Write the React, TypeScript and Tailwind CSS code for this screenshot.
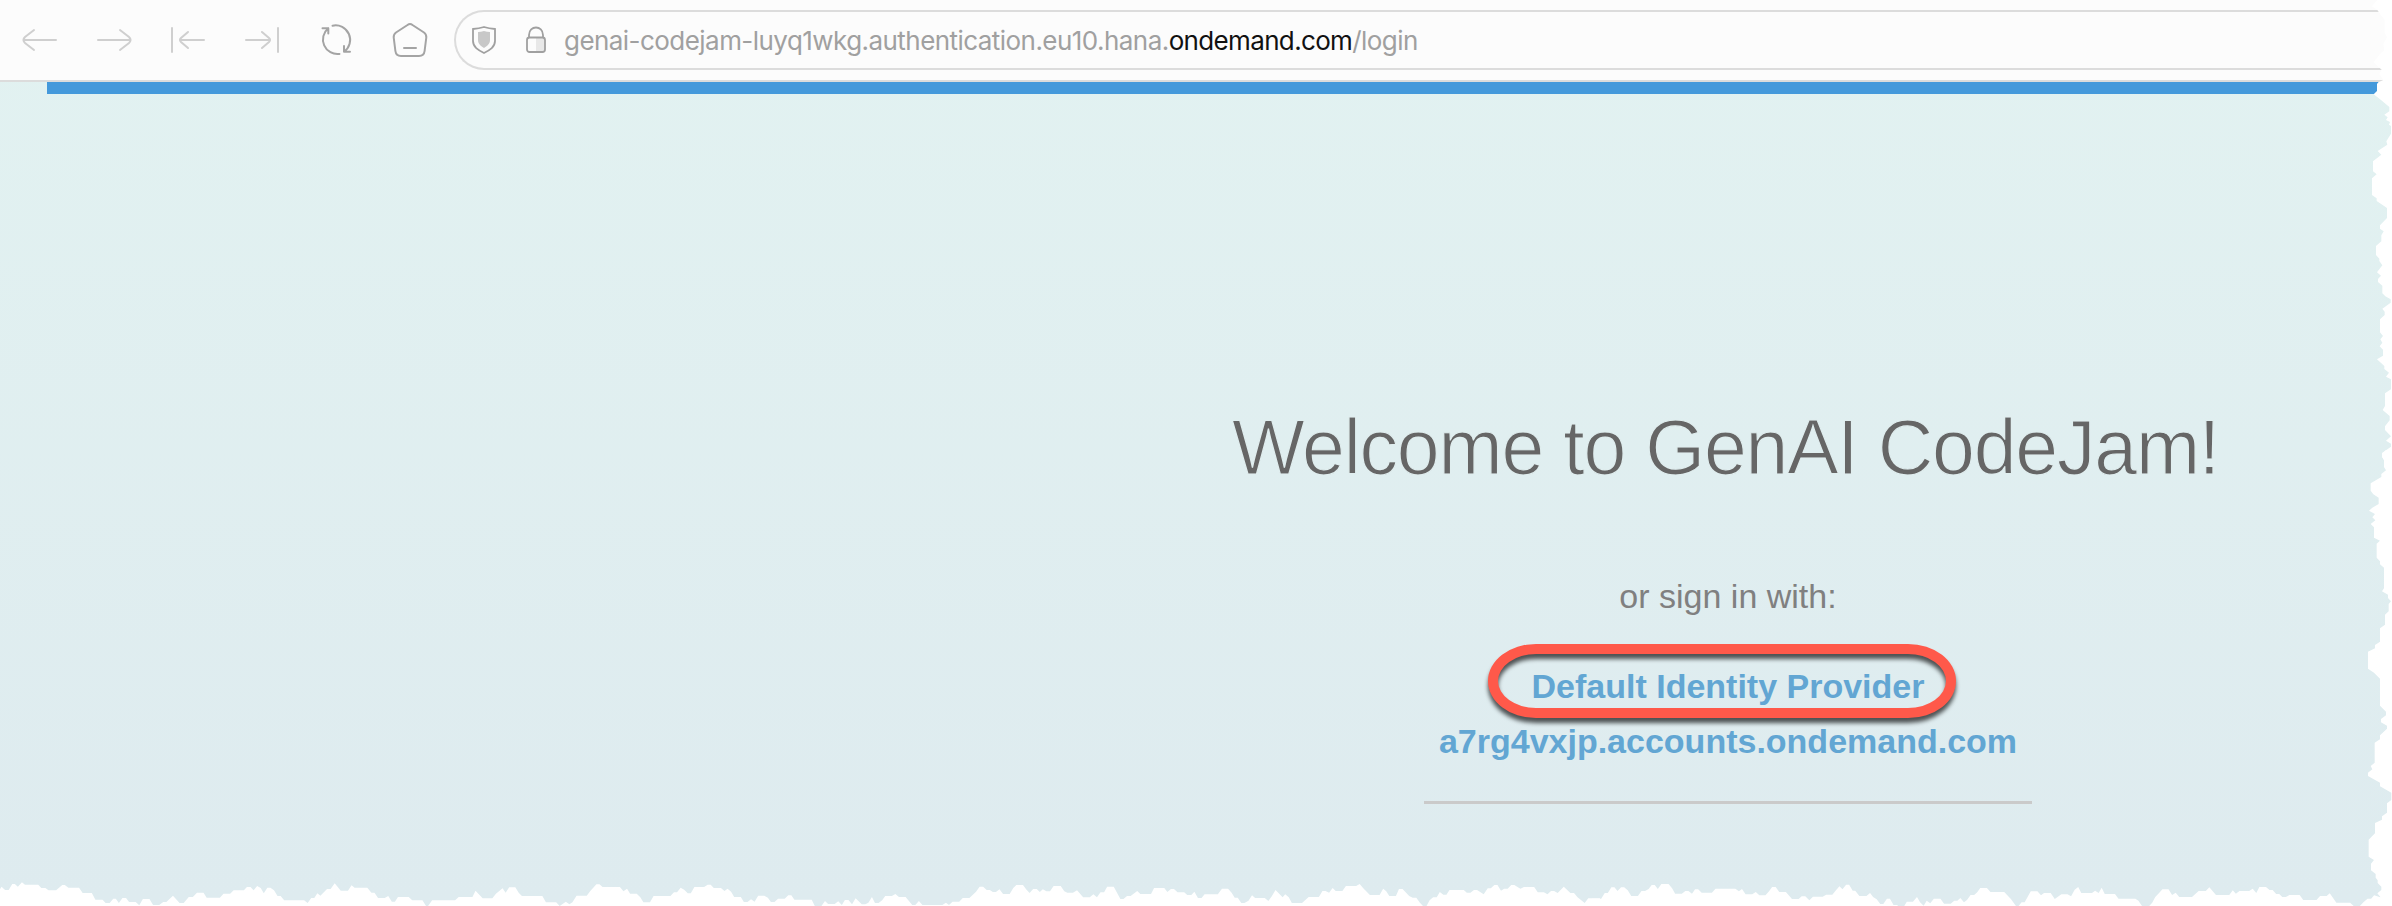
import type { ReactNode } from "react";

const RIGHT_TOP =
  "136,0 120,19 136,30 146,44 158,60 158,98 165,112 154,132 157,150 141,166 125,187 141,202 149,209 142,222 154,240 139,247 135,252 135,273 125,283 147,300 172,321 172,334 157,344 167,352 162,360 174,366 171,374 177,378 177,401 163,424 166,434 137,453 148,464 123,484 123,514 134,523 120,535 120,585 134,595 134,603 165,624 165,654 144,676 144,686 155,694 148,706 148,724 132,738 132,765 142,776 142,783 151,796 135,817 147,827 138,837 138,846 151,857 151,880 160,889 176,898 176,908 151,926 158,935 158,945 144,958 144,997 153,1008 145,1018 151,1028 143,1039 153,1049 153,1067 135,1078 157,1098 157,1107 171,1118 162,1130 177,1138 177,1168 159,1180 159,1218 152,1230 173,1248 173,1261 159,1279 159,1290 177,1309 162,1322 177,1331 177,1340 150,1359 150,1370 156,1380";

const RIGHT_BOTTOM =
  "162,0 150,12 150,20 156,30 156,51 162,61 148,72 148,81 116,100 116,122 124,133 140,143 140,162 121,173 111,182 129,192 121,202 130,211 116,222 126,232 126,263 144,272 134,281 134,323 144,334 144,343 156,353 156,415 150,424 168,434 168,444 177,454 170,462 170,484 159,494 159,524 144,535 144,575 129,585 129,595 108,605 108,656 126,668 144,686 144,767 162,785 162,796 147,807 147,817 165,827 165,836 144,856 144,868 128,878 128,938 116,948 121,958 108,968 108,978 144,998 144,1009 178,1028 178,1050 165,1060 165,1088 150,1099 150,1109 129,1119 129,1150 110,1169 110,1220 126,1230 117,1241 117,1261 131,1272 131,1283 137,1291 137,1299 148,1310 148,1320 136,1330 145,1341";

const BOTTOM_LEFT =
  "0,70 3,62 10,72 17,72 24,54 29,54 35,62 43,49 49,56 75,56 81,66 89,66 95,73 110,73 122,57 127,57 134,65 155,65 162,81 180,81 187,101 201,101 207,111 215,111 222,98 227,98 233,111 240,96 247,96 253,108 266,108 273,118 280,99 293,99 300,117 312,117 320,108 326,108 339,89 352,111 360,111 370,93 378,93 386,80 399,80 405,95 431,95 438,83 451,83 458,73 478,73 484,63 491,63 497,73 504,60 511,66 517,82 524,65 530,65 537,73 544,90 550,90 557,103 596,103 603,111 610,96 616,96 622,82 628,89 641,69 648,69 656,52 668,74 682,74 689,58 695,65 720,65 728,80 734,80 741,96 754,96 761,90 768,107 774,107 780,93 801,93 808,103 828,103 835,120 839,120 847,103 892,103 899,93 926,93 932,74 946,97 965,97 972,83 985,67 991,80 998,64 1010,64 1017,81 1023,90 1063,90 1070,109 1090,109 1097,120 1109,107 1116,115 1122,109 1130,89 1150,89 1157,75 1169,55 1175,55 1181,63 1215,63 1222,76 1229,68 1235,83 1248,83 1255,94 1261,109 1274,109 1281,90 1314,90 1321,79 1327,79 1334,65 1341,71 1348,82 1354,82 1361,63 1380,63 1387,56 1393,56 1399,66 1413,66 1420,75 1426,68 1433,77 1439,93 1452,93 1458,108 1465,108 1472,100 1479,107 1486,89 1498,89 1505,95 1511,108 1518,108 1525,98 1538,98 1545,88 1551,88 1557,101 1568,101";

const BOTTOM_MIDDLE =
  "0,101 23,101 29,120 42,120 49,105 55,114 68,114 75,106 82,117 88,102 95,102 102,115 109,97 121,115 128,115 134,110 141,93 147,111 154,111 161,103 167,90 180,90 187,84 194,93 207,93 220,117 226,117 233,105 240,117 279,117 286,110 292,117 299,107 312,107 319,96 332,96 345,77 352,62 359,62 366,72 372,72 378,78 384,78 391,70 398,84 411,84 418,66 424,57 437,57 444,71 450,81 457,69 464,69 470,78 476,70 483,76 490,76 497,60 511,60 518,76 524,80 535,80 543,73 555,94 568,94 575,85 582,94 589,79 596,79 602,62 615,62 628,99 634,99 641,90 648,90 661,75 667,84 688,84 694,66 714,66 720,78 727,69 733,69 740,79 753,79 759,87 767,87 773,77 780,96 787,96 793,85 819,85 827,68 839,68 846,80 852,95 858,95 865,111 871,111 879,104 886,88 892,96 911,96 918,105 925,90 932,72 946,94 951,85 958,94 964,111 984,111 997,93 1017,93 1024,75 1030,75 1037,80 1044,66 1050,75 1063,75 1070,60 1090,60 1097,54 1104,67 1117,87 1136,87 1143,68 1149,76 1155,90 1168,90 1174,69 1181,69 1194,90 1201,95 1208,95 1215,110 1221,120 1228,120 1234,103 1241,94 1248,94 1254,78 1261,86 1267,86 1273,72 1301,72 1307,80 1314,80 1321,72 1327,72 1340,85 1348,67 1354,67 1361,57 1367,57 1374,74 1380,68 1387,68 1394,57 1400,57 1412,68 1419,63 1439,63 1446,79 1458,79 1465,85 1472,75 1478,75 1485,81 1497,62 1510,81 1517,81 1524,94 1538,111 1545,97 1568,97";

const BOTTOM_RIGHT =
  "0,98 18,98 25,81 31,81 38,64 44,64 50,75 57,64 63,64 70,73 77,90 90,90 97,75 104,75 111,69 117,57 123,57 129,69 136,54 150,54 157,67 163,83 176,83 183,75 189,75 196,83 202,70 208,70 215,80 235,80 242,68 281,68 288,76 294,69 301,85 314,85 321,78 328,88 340,88 347,76 353,63 360,63 367,78 380,78 392,99 405,99 411,91 418,91 426,103 433,92 452,92 459,86 471,86 479,71 485,61 491,70 498,56 504,56 511,74 516,74 524,90 538,90 545,81 551,93 558,100 565,114 571,114 578,98 584,98 591,117 598,117 600,120 612,120 617,107 629,107 637,93 643,109 650,119 656,104 663,112 670,98 683,98 690,113 703,113 710,104 716,104 722,96 729,109 735,102 742,87 749,87 755,79 761,66 774,66 781,78 808,78 821,99 831,120 836,120 842,109 848,109 860,76 873,76 880,88 886,81 899,81 907,99 920,85 932,85 939,91 946,71 953,63 959,81 980,81 986,74 993,81 999,65 1005,84 1025,84 1032,98 1065,98 1071,104 1078,120 1092,120 1098,110 1104,93 1111,82 1118,70 1130,70 1137,87 1144,80 1151,93 1176,93 1182,85 1189,75 1203,75 1210,64 1223,87 1249,87 1256,73 1262,83 1269,75 1288,75 1295,68 1302,81 1308,63 1321,63 1328,72 1334,72 1341,84 1347,84 1353,93 1360,93 1367,87 1387,87 1394,102 1420,102 1427,90 1440,90 1446,82 1459,110 1486,110 1493,120 1505,120 1512,109 1520,98 1527,98 1533,88 1545,94";

function TornEdges() {
  return (
    <svg className="pointer-events-none absolute inset-0 h-[906px] w-[2392px]" viewBox="0 0 2392 906" fill="#fff">
      <polygon transform="translate(2332 0) scale(0.33333)" points={`${RIGHT_TOP} 190,1380 190,0`} />
      <polygon transform="translate(2332 450) scale(0.33333)" points={`${RIGHT_BOTTOM} 145,1375 190,1375 190,0`} />
      <polygon transform="translate(0 866) scale(0.510204 0.33333)" points={`${BOTTOM_LEFT} 1568,130 0,130`} />
      <polygon transform="translate(800 866) scale(0.510204 0.33333)" points={`${BOTTOM_MIDDLE} 1568,130 0,130`} />
      <polygon transform="translate(1592 866) scale(0.510204 0.33333)" points={`${BOTTOM_RIGHT} 1568,94 1568,130 0,130`} />
    </svg>
  );
}

function Icon({ children, className }: { children: ReactNode; className: string }) {
  return (
    <svg
      className={`h-[80px] w-[40px] shrink-0 ${className}`}
      viewBox="0 0 40 80"
      fill="none"
      stroke="currentColor"
      strokeWidth="2"
      strokeLinecap="round"
      strokeLinejoin="round"
    >
      {children}
    </svg>
  );
}

function Toolbar() {
  return (
    <header className="flex h-[82px] w-full items-start border-b-2 border-[#dcdcdc] bg-[#fcfcfc] pl-5">
      <div className="flex w-[434px] shrink-0 gap-[34px] text-[#cfcfcf]">
        <Icon className="">
          <path d="M36 40H4M14 30L5 37Q2 40 5 43L14 50" />
        </Icon>
        <Icon className="">
          <path d="M4 40H36M26 30L35 37Q38 40 35 43L26 50" />
        </Icon>
        <Icon className="">
          <path d="M4 28V52M36 40H12M20 32L13 38Q11 40 13 42L20 48" />
        </Icon>
        <Icon className="">
          <path d="M36 28V52M4 40H28M20 32L27 38Q29 40 27 42L20 48" />
        </Icon>
        <Icon className="text-[#a4a4a4]">
          <path d="M16.500 25.700A14.500 14.500 0 0 1 28 51.700V46M34 51.700H28" />
          <path d="M23.500 53.900A14.500 14.500 0 0 1 12.300 28.300V33.500M6.500 28.300H12.300" />
        </Icon>
        <Icon className="text-[#a4a4a4]">
          <path d="M17.500 25Q20 23 22.500 25L34 32.500Q36.600 34.500 36.300 37.500L34.600 51Q34 56 29 56H11Q6 56 5.400 51L3.700 37.500Q3.400 34.500 6 32.500ZM14 48H26" />
        </Icon>
      </div>
      <div className="mt-[10px] -mr-[50px] flex h-[60px] grow items-center rounded-l-[30px] border-2 border-r-0 border-[#dcdcdc] pl-4">
        <svg className="h-[28px] w-[24px] shrink-0" viewBox="0 0 24 28" fill="none">
          <path d="M1 3Q7 2.500 12 1Q17 2.500 23 3V15C23 21 18 24 12 27C6 24 1 21 1 15Z" stroke="#a0a0a0" strokeWidth="1.800" />
          <path d="M6 6Q9 6 12 5Q15 6 18 6V14C18 18 15 20 12 22C9 20 6 18 6 14Z" fill="#c8c8c8" />
        </svg>
        <svg className="ml-[30px] h-[28px] w-[20px] shrink-0" viewBox="0 0 20 28" fill="none">
          <path d="M10 12H19V26H10Z" fill="#e8e8e8" />
          <path d="M3 11.500V9C3 -1 17 -1 17 9V11.500" stroke="#a0a0a0" strokeWidth="1.800" />
          <rect x="1" y="11.500" width="18" height="14.500" rx="2.500" stroke="#a0a0a0" strokeWidth="1.800" />
        </svg>
        <p className="mt-[2px] ml-[18px] whitespace-nowrap font-['Inter',sans-serif] text-[26px] leading-[32px] tracking-[-0.55px] text-[#a0a0a0]">
          genai-codejam-luyq1wkg.authentication.eu10.hana.
          <span className="tracking-[-0.65px] text-[#111]">ondemand.com</span>/login
        </p>
      </div>
    </header>
  );
}

export default function App() {
  return (
    <div className="relative h-[906px] w-[2392px] overflow-hidden bg-linear-to-b from-[#e2f2f1] to-[#deebef]">
      <Toolbar />
      <div className="ml-[47px] h-3 bg-[#4499db]" />
      <main className="ml-[1064px] flex w-[1328px] flex-col items-center font-['Liberation_Sans',Arial,sans-serif] text-[34px]">
        <h1 className="mt-[308px] mr-[5px] whitespace-nowrap text-[77px] leading-[90px] tracking-[-1.2px] text-[#666] [-webkit-text-stroke:1.2px_#e0eeef]">
          Welcome to GenAI CodeJam!
        </h1>
        <p className="mt-[84px] leading-[40px] text-[#808080]">or sign in with:</p>
        <div className="mt-[43px] flex w-[608px] flex-col items-center border-b-[3px] border-[#cacaca] pb-[32px] leading-[55px] font-bold text-[#62a6d3]">
          <a className="relative">
            Default Identity Provider
            <span className="pointer-events-none absolute top-[-15px] left-[-44px] h-[74px] w-[468px] rounded-[48px/37px] border-[10px] border-[#ff594a] [filter:drop-shadow(0_5px_2px_rgba(0,0,0,0.65))]" />
          </a>
          <a>a7rg4vxjp.accounts.ondemand.com</a>
        </div>
      </main>
      <TornEdges />
    </div>
  );
}
